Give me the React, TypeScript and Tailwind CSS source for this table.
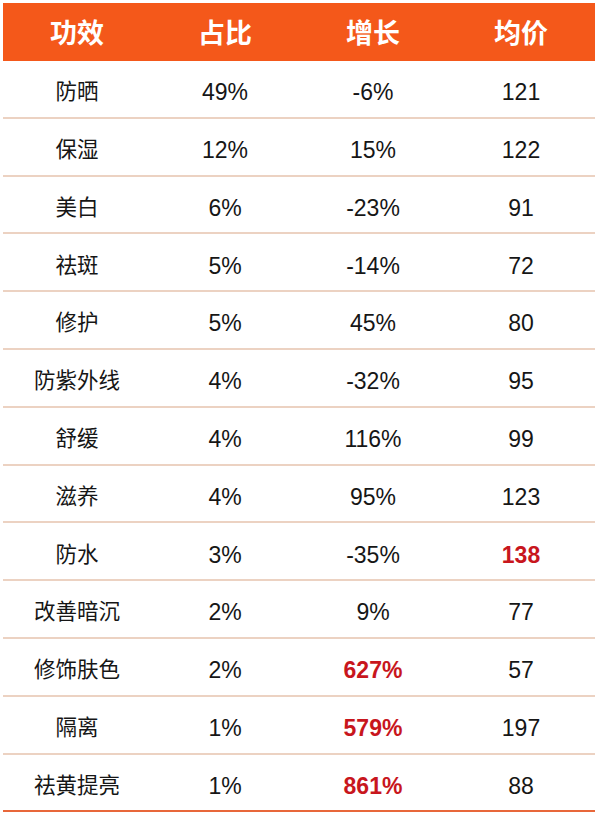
const HEAD = ["功效", "占比", "增长", "均价"];

type Row = { name: string; share: string; growth: string; price: string; hotGrowth?: boolean; hotPrice?: boolean };

const ROWS: Row[] = [
  { name: "防晒", share: "49%", growth: "-6%", price: "121" },
  { name: "保湿", share: "12%", growth: "15%", price: "122" },
  { name: "美白", share: "6%", growth: "-23%", price: "91" },
  { name: "祛斑", share: "5%", growth: "-14%", price: "72" },
  { name: "修护", share: "5%", growth: "45%", price: "80" },
  { name: "防紫外线", share: "4%", growth: "-32%", price: "95" },
  { name: "舒缓", share: "4%", growth: "116%", price: "99" },
  { name: "滋养", share: "4%", growth: "95%", price: "123" },
  { name: "防水", share: "3%", growth: "-35%", price: "138", hotPrice: true },
  { name: "改善暗沉", share: "2%", growth: "9%", price: "77" },
  { name: "修饰肤色", share: "2%", growth: "627%", price: "57", hotGrowth: true },
  { name: "隔离", share: "1%", growth: "579%", price: "197", hotGrowth: true },
  { name: "祛黄提亮", share: "1%", growth: "861%", price: "88", hotGrowth: true },
];

const font = "font-['Liberation_Sans','Noto_Sans_CJK_SC',sans-serif]";

function Cell({ children, hot, cjk }: { children: string; hot?: boolean; cjk?: boolean }) {
  return (
    <div
      className={`flex items-center justify-center ${cjk ? "text-[21.5px]" : "text-[23px]"} ${
        hot ? "font-bold text-[#c8161d]" : "text-[#161616]"
      }`}
    >
      {children}
    </div>
  );
}

export default function App() {
  return (
    <div className={`min-h-[821px] w-[600px] bg-white pl-[3px] pr-[5px] pt-[3px] ${font}`}>
      {/* Header */}
      <div className="grid h-[58px] grid-cols-4 bg-[#f4581a] text-[27px] font-bold text-white">
        {HEAD.map((h) => (
          <div key={h} className="flex items-center justify-center font-['Noto_Sans_CJK_SC',sans-serif]">
            {h}
          </div>
        ))}
      </div>

      {/* Rows */}
      {ROWS.map((r, i) => (
        <div
          key={r.name}
          className={`grid h-[57.8px] grid-cols-4 border-b-2 pt-[7px] ${
            i === ROWS.length - 1 ? "border-[#e8673a]" : "border-[#ecd2c2]"
          }`}
        >
          <Cell cjk>{r.name}</Cell>
          <Cell>{r.share}</Cell>
          <Cell hot={r.hotGrowth}>{r.growth}</Cell>
          <Cell hot={r.hotPrice}>{r.price}</Cell>
        </div>
      ))}
    </div>
  );
}
